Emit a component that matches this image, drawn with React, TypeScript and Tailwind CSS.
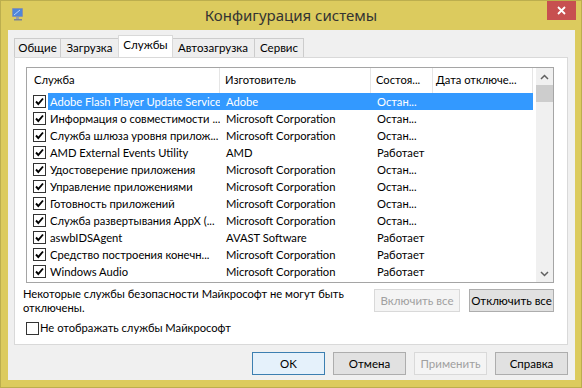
import React from "react";

const rows: [string, string, string][] = [
  ["Adobe Flash Player Update Service", "Adobe", "Остан..."],
  ["Информация о совместимости ...", "Microsoft Corporation", "Остан..."],
  ["Служба шлюза уровня прилож...", "Microsoft Corporation", "Остан..."],
  ["AMD External Events Utility", "AMD", "Работает"],
  ["Удостоверение приложения", "Microsoft Corporation", "Остан..."],
  ["Управление приложениями", "Microsoft Corporation", "Остан..."],
  ["Готовность приложений", "Microsoft Corporation", "Остан..."],
  ["Служба развертывания AppX (...", "Microsoft Corporation", "Остан..."],
  ["aswbIDSAgent", "AVAST Software", "Работает"],
  ["Средство построения конечн...", "Microsoft Corporation", "Работает"],
  ["Windows Audio", "Microsoft Corporation", "Работает"],
];

function CheckBox({ checked }: { checked: boolean }) {
  return (
    <div className="w-[13px] h-[13px] border border-[#333333] bg-white shrink-0 flex items-center justify-center">
      {checked && (
        <svg width="11" height="11" viewBox="0 0 11 11">
          <path d="M2 5.5 L4.3 8 L9 2.5" fill="none" stroke="#000" strokeWidth="1.9" />
        </svg>
      )}
    </div>
  );
}

function AppIcon() {
  return (
    <svg width="14" height="14" viewBox="0 0 14 14">
      <rect x="1" y="1" width="11" height="9" rx="1" fill="#8a94a6" />
      <rect x="2" y="2" width="9" height="7" fill="#4f86d9" />
      <path d="M3 8 L9 3" stroke="#b9d4f7" strokeWidth="1" />
      <rect x="5" y="10" width="3" height="2" fill="#9aa0aa" />
      <rect x="3" y="12" width="8" height="1.5" fill="#7d8593" />
    </svg>
  );
}

function Tab({ label, w, selected }: { label: string; w: string; selected?: boolean }) {
  if (selected) {
    return (
      <div
        className={`${w} h-[22px] -mx-[1px] relative z-10 bg-white border border-[#d9d9d9] border-b-0 flex items-start justify-center pt-[1px] leading-[15px] text-black whitespace-nowrap`}
      >
        {label}
      </div>
    );
  }
  return (
    <div
      className={`${w} h-[19px] bg-[#eeeeee] border border-[#cccccc] border-b-0 flex items-center justify-center text-black -ml-[1px] first:ml-0 whitespace-nowrap`}
    >
      {label}
    </div>
  );
}

function Btn({ label, w, disabled, primary }: { label: string; w: string; disabled?: boolean; primary?: boolean }) {
  const cls = disabled
    ? "bg-[#f4f4f4] border-[#d9d9d9] text-[#a0a0a0]"
    : primary
    ? "bg-[#e5f1fb] border-[#3c7fb1] text-black"
    : "bg-[#e1e1e1] border-[#adadad] text-black";
  return (
    <div className={`${w} h-[23px] border ${cls} flex items-center justify-center leading-none whitespace-nowrap`}>
      {label}
    </div>
  );
}

export default function App() {
  return (
    <div
      className="w-[582px] h-[388px] bg-[#dccb5e] border border-[#bcae4e] flex flex-col overflow-hidden text-[11.5px]"
      style={{ fontFamily: 'Lato, "Noto Sans", sans-serif' }}
    >
      {/* Title bar */}
      <div className="h-[29px] grid grid-cols-[80px_1fr_80px] items-start shrink-0">
        <div className="pl-[10px] pt-[6px]">
          <AppIcon />
        </div>
        <div
          className="text-center text-[15px] text-[#333333] pt-[4px] leading-[20px]"
          style={{ fontFamily: '"Noto Sans", sans-serif' }}
        >
          Конфигурация системы
        </div>
        <div className="flex justify-end pr-[5px]">
          <div className="w-[29px] h-[20px] -mt-[1px] bg-[#c75050] flex items-center justify-center">
            <svg width="9" height="9" viewBox="0 0 9 9">
              <path d="M1 1 L8 8 M8 1 L1 8" stroke="#fff" strokeWidth="1.8" />
            </svg>
          </div>
        </div>
      </div>

      {/* Client */}
      <div className="ml-[7px] mr-[6px] mb-[7px] flex-1 bg-[#f0f0f0] flex flex-col">
        {/* Tabs */}
        <div className="h-[27px] pl-[6px] flex items-end shrink-0">
          <Tab label="Общие" w="w-[47px]" />
          <Tab label="Загрузка" w="w-[59px]" />
          <Tab label="Службы" w="w-[55px]" selected />
          <Tab label="Автозагрузка" w="w-[84px]" />
          <Tab label="Сервис" w="w-[50px]" />
        </div>

        {/* Panel */}
        <div className="ml-[6px] w-[554px] h-[288px] bg-white border border-[#d9d9d9] pl-[11px] pt-[9px] flex flex-col shrink-0 text-[11.2px]">
          {/* List */}
          <div className="w-[528px] h-[216px] border border-[#a5a5a5] flex overflow-hidden text-black">
            <div className="w-[509px] flex flex-col">
              <div className="h-[25px] flex items-center shrink-0">
                <div className="w-[193px] h-full pl-[7px] flex items-center border-r border-[#e5e5e5]">Служба</div>
                <div className="w-[151px] h-full pl-[5px] flex items-center border-r border-[#e5e5e5]">Изготовитель</div>
                <div className="w-[62px] h-full pl-[5px] flex items-center border-r border-[#e5e5e5] whitespace-nowrap overflow-hidden">Состоя...</div>
                <div className="w-[100px] h-full pl-[3px] flex items-center border-r border-[#e5e5e5] whitespace-nowrap overflow-hidden">Дата отключе...</div>
              </div>
              {rows.map(([name, maker, state], i) => (
                <div key={i} className="h-[17px] flex items-center shrink-0 leading-[17px]">
                  <div className="w-[21px] pl-[6px] flex items-center">
                    <CheckBox checked />
                  </div>
                  <div className={`w-[485px] h-full flex items-center whitespace-nowrap ${i === 0 ? "bg-[#3399ff] text-white" : ""}`}>
                    <div className="w-[172px] pl-[2px] overflow-hidden">{name}</div>
                    <div className="w-[151px] pl-[6px] overflow-hidden">{maker}</div>
                    <div className="w-[62px] pl-[6px] overflow-hidden">{state}</div>
                    <div className="w-[100px]"></div>
                  </div>
                </div>
              ))}
            </div>
            {/* Scrollbar */}
            <div className="w-[17px] bg-[#f0f0f0] flex flex-col">
              <div className="h-[17px] flex items-center justify-center">
                <svg width="9" height="6" viewBox="0 0 9 6">
                  <path d="M1 5 L4.5 1.5 L8 5" fill="none" stroke="#606060" strokeWidth="1.5" />
                </svg>
              </div>
              <div className="h-[17px] bg-[#cdcdcd]" />
              <div className="flex-1" />
              <div className="h-[17px] flex items-center justify-center">
                <svg width="9" height="6" viewBox="0 0 9 6">
                  <path d="M1 1 L4.5 4.5 L8 1" fill="none" stroke="#606060" strokeWidth="1.5" />
                </svg>
              </div>
            </div>
          </div>

          {/* Info + buttons */}
          <div className="w-[528px] mt-[4px] flex items-start justify-between">
            <div className="-ml-[3px] leading-[14px] text-black whitespace-nowrap">
              Некоторые службы безопасности Майкрософт не могут быть
              <br />
              отключены.
            </div>
            <div className="flex gap-[9px] mt-[2px] text-[11.5px]">
              <Btn label="Включить все" w="w-[86px]" disabled />
              <Btn label="Отключить все" w="w-[85px]" />
            </div>
          </div>

          {/* Hide MS services */}
          <div className="mt-[5px] flex items-center gap-[1px] text-black">
            <CheckBox checked={false} />
            <span>Не отображать службы Майкрософт</span>
          </div>
        </div>

        {/* Bottom buttons */}
        <div className="mt-[7px] pr-[7px] flex justify-end gap-[8px]">
          <Btn label="OK" w="w-[73px]" primary />
          <Btn label="Отмена" w="w-[73px]" />
          <Btn label="Применить" w="w-[73px]" disabled />
          <Btn label="Справка" w="w-[73px]" />
        </div>
      </div>
    </div>
  );
}
